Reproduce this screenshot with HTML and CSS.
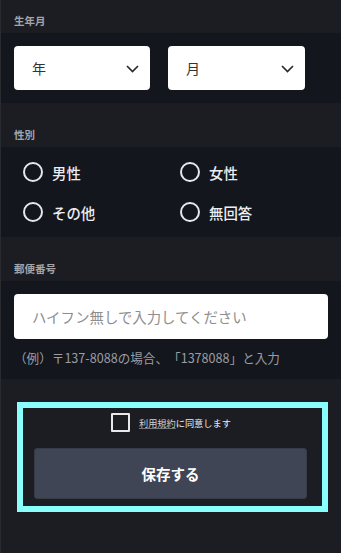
FILE: index.html
```html
<!DOCTYPE html>
<html lang="ja">
<head>
<meta charset="utf-8">
<link rel="stylesheet" href="styles.css">
</head>
<body>
<div class="page">
  <div class="label-bar first"><span>生年月</span></div>
  <div class="field selects">
    <div class="select year"><span>年</span>
      <svg class="chev" width="13" height="8" viewBox="0 0 13 8"><path d="M1 1 L6.5 6.5 L12 1" fill="none" stroke="#2b2b2b" stroke-width="1.7"/></svg>
    </div>
    <div class="select month"><span>月</span>
      <svg class="chev" width="13" height="8" viewBox="0 0 13 8"><path d="M1 1 L6.5 6.5 L12 1" fill="none" stroke="#2b2b2b" stroke-width="1.7"/></svg>
    </div>
  </div>

  <div class="label-bar"><span>性別</span></div>
  <div class="field radios">
    <label class="radio"><span class="circle"></span><span>男性</span></label>
    <label class="radio"><span class="circle"></span><span>女性</span></label>
    <label class="radio"><span class="circle"></span><span>その他</span></label>
    <label class="radio"><span class="circle"></span><span>無回答</span></label>
  </div>

  <div class="label-bar"><span>郵便番号</span></div>
  <div class="field postal">
    <div class="input"><span class="placeholder">ハイフン無しで入力してください</span></div>
    <p class="help">（例）〒137-8088の場合、「1378088」と入力</p>
  </div>

  <div class="footer">
    <div class="agree-box">
      <div class="agree">
        <span class="checkbox"></span>
        <span class="agree-text"><span class="link">利用規約</span>に同意します</span>
      </div>
      <div class="save">保存する</div>
    </div>
  </div>
</div>
</body>
</html>
```

FILE: styles.css
```css
* { box-sizing: border-box; }
html, body {
  margin: 0;
  padding: 0;
  background: #1c1d22;
  font-family: "Noto Sans CJK JP", "Noto Sans", sans-serif;
  text-spacing-trim: space-all;
}
.page {
  width: 341px;
  min-height: 553px;
  border-left: 1px solid #2a2b31;
  background: #1c1d22;
}
.label-bar {
  height: 44px;
  padding: 24px 0 0 13px;
  font-size: 10.5px;
  line-height: 16px;
  font-weight: 700;
  color: #a3a5ab;
  background: #1c1d22;
}
.label-bar.first {
  height: 33px;
  padding-top: 13px;
}
.field {
  background: #13161d;
}
.selects {
  display: flex;
  gap: 18px;
  padding: 13px 0 13px 13px;
}
.select {
  height: 44px;
  background: #fff;
  border-radius: 4px;
  display: flex;
  align-items: center;
  justify-content: space-between;
  padding: 0 11px 0 18px;
  font-size: 14px;
  color: #333;
}
.select.year { width: 136px; }
.select.month { width: 137px; }
.chev { display: block; margin-top: 2px; }

.radios {
  display: grid;
  grid-template-columns: 157px 157px;
  grid-auto-rows: 40px;
  padding: 5px 0 5px 22px;
}
.radio {
  display: flex;
  align-items: center;
  gap: 9px;
  font-size: 14.4px;
  font-weight: 500;
  color: #eceef2;
}
.circle {
  width: 20px;
  height: 20px;
  border: 2px solid #e8e8ea;
  border-radius: 50%;
  flex: none;
}

.postal {
  padding: 13px 13px 11px 13px;
}
.input {
  height: 45px;
  background: #fff;
  border-radius: 4px;
  display: flex;
  align-items: center;
  padding-left: 18px;
  font-size: 14.4px;
}
.placeholder { color: #8d8d90; }
.help {
  margin: 9px 0 0 0;
  font-size: 12.6px;
  line-height: 20px;
  color: #9b9da4;
}

.footer {
  padding: 23px 0 0 16px;
  background: #1c1d22;
  height: 174px;
}
.agree-box {
  width: 311px;
  height: 110px;
  border: 6px solid #89fffb;
  padding: 5px 0 0 11px;
}
.agree {
  display: flex;
  align-items: center;
  gap: 9px;
  height: 19px;
  padding-left: 77px;
}
.checkbox {
  width: 19px;
  height: 19px;
  border: 2px solid #e8e8ea;
  border-radius: 1px;
  flex: none;
}
.agree-text {
  font-size: 9.2px;
  color: #eceef2;
  white-space: nowrap;
}
.link {
  color: #cfd1d6;
  text-decoration: underline;
  text-decoration-color: #777;
}
.save {
  margin-top: 16px;
  width: 273px;
  height: 51px;
  background: #3f4555;
  border: 1px solid #363b48;
  border-radius: 3px;
  display: flex;
  align-items: center;
  justify-content: center;
  font-size: 14.5px;
  font-weight: 700;
  color: #fff;
}
```
